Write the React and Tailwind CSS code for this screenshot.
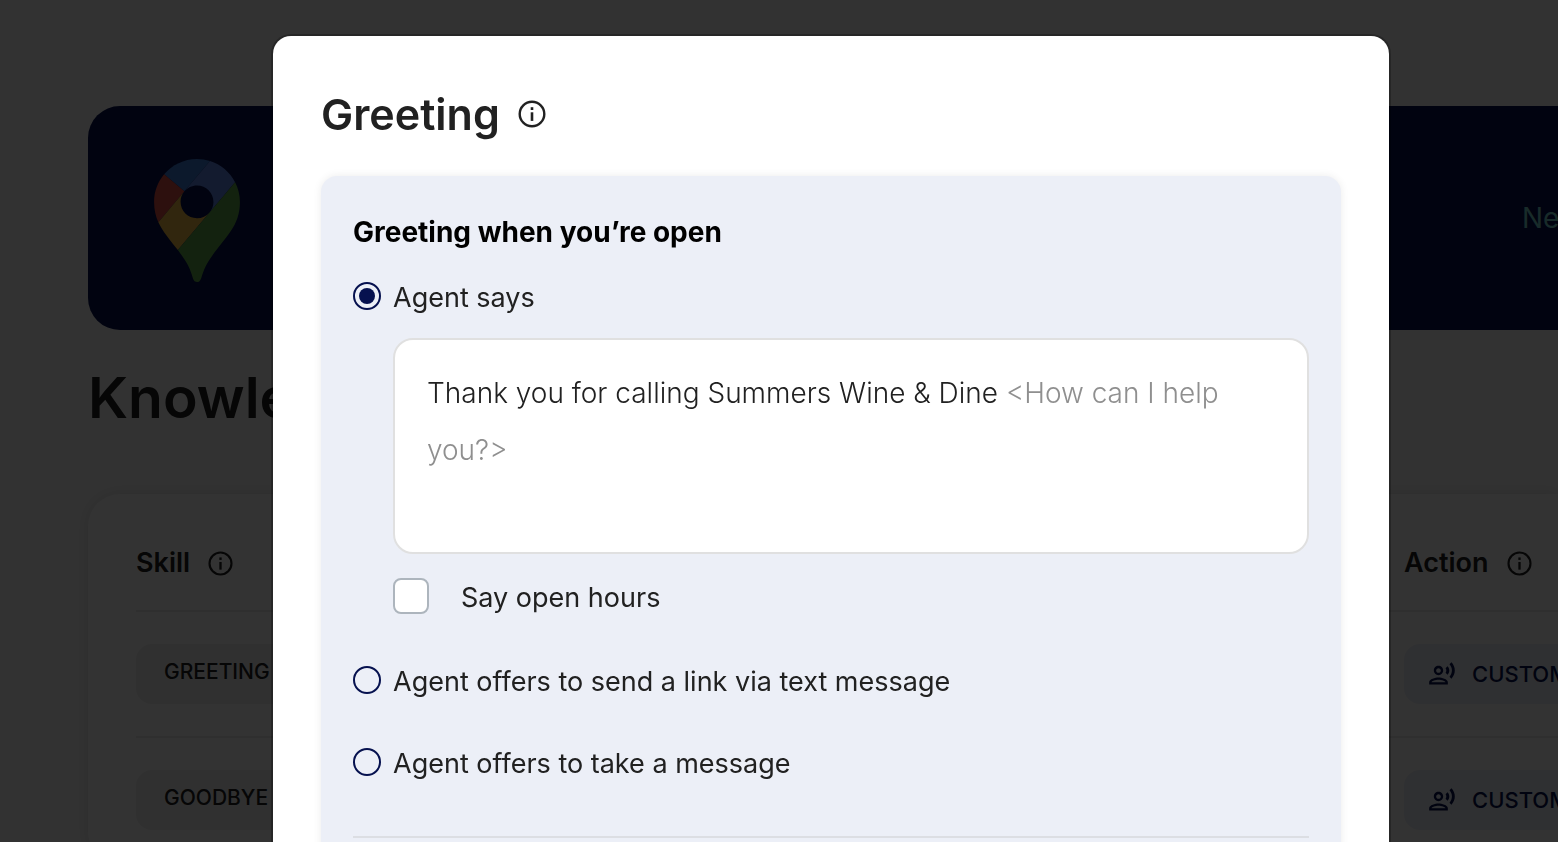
import { useState } from "react";
import { MdOutlineRecordVoiceOver } from "react-icons/md";

function InfoIcon({ className }) {
  return (
    <svg viewBox="0 0 28 28" fill="none" className={className} aria-hidden="true">
      <circle cx="14" cy="14" r="12.3" stroke="currentColor" strokeWidth="2.4" />
      <rect x="12.7" y="7.2" width="2.6" height="2.8" fill="currentColor" />
      <rect x="12.7" y="12.3" width="2.6" height="8.6" fill="currentColor" />
    </svg>
  );
}

function MapPin() {
  return (
    <svg viewBox="0 0 92.4 132.4" className="mt-1 h-[123px] w-[86px]" role="img" aria-label="Location">
      <path fill="#3c7edb" d="M60.2 2.2C55.8.8 51 0 46.1 0 32 0 19.3 6.4 10.8 16.5l21.8 18.3L60.2 2.2z" />
      <path fill="#e04f46" d="M10.8 16.5C4.1 24.5 0 34.9 0 46.1c0 8.7 1.7 15.7 4.6 22l28-33.3-21.8-18.3z" />
      <path fill="#5f87e8" d="M46.2 28.5c9.8 0 17.7 7.9 17.7 17.7 0 4.3-1.6 8.3-4.2 11.4 0 0 13.9-16.6 27.5-32.7-5.6-10.8-15.3-19-27-22.7L32.6 34.8c3.3-3.8 8.1-6.3 13.6-6.3" />
      <path fill="#f2bc48" d="M46.2 63.8c-9.8 0-17.7-7.9-17.7-17.7 0-4.3 1.5-8.3 4.1-11.3l-28 33.3c4.8 10.6 12.8 19.2 21 29.9l34.1-40.5c-3.3 3.9-8.1 6.3-13.5 6.3" />
      <path fill="#62aa4d" d="M59.1 109.2c15.4-24.1 33.3-35 33.3-63 0-7.7-1.9-14.9-5.2-21.3L25.6 98c2.6 3.4 5.3 7.3 7.9 11.3 9.4 14.5 6.8 23.1 12.8 23.1s3.4-8.7 12.8-23.2" />
    </svg>
  );
}

const skills = ["GREETING", "GOODBYE"];

function SkillsPage() {
  return (
    <main className="flex h-screen flex-col overflow-hidden bg-[#fafafa] pl-[88px] pt-[106px]">
      <header className="flex h-56 shrink-0 items-center justify-between rounded-l-[32px] bg-[#06114f] pl-[66px]">
        <MapPin />
        <span className="w-9 overflow-hidden whitespace-nowrap text-[28px] text-[#7bd5cf]">Ne</span>
      </header>
      <h1 className="mt-8 text-[57px] font-semibold leading-[72px]">Knowledge</h1>
      <section className="mt-[60px] grow rounded-l-[32px] bg-white pl-12 pt-[22px] shadow-[0_0_16px_rgba(0,0,0,0.12)]">
        <table className="w-full table-fixed text-left">
          <thead>
            <tr className="h-[95px] border-b-2 border-[#e8e8e8]">
              <th className="font-semibold">
                <span className="flex items-center gap-[18px] text-[27px]">
                  Skill
                  <InfoIcon className="size-[25px]" />
                </span>
              </th>
              <th className="w-[154px] font-semibold">
                <span className="flex items-center gap-[18px] text-[27px]">
                  Action
                  <InfoIcon className="size-[25px]" />
                </span>
              </th>
            </tr>
          </thead>
          <tbody>
            {skills.map((skill) => (
              <tr key={skill} className="h-[126px] border-b-2 border-[#e8e8e8]">
                <td>
                  <span className="flex h-[60px] w-60 items-center rounded-2xl bg-[#f0f0f0] px-7 pb-1 text-[21px] font-medium">
                    {skill}
                  </span>
                </td>
                <td className="overflow-hidden">
                  <span className="flex h-[60px] items-center gap-4 whitespace-nowrap rounded-l-2xl bg-[#eceff7] pl-6 text-[22px] font-medium text-[#06114f]">
                    <MdOutlineRecordVoiceOver className="size-7 shrink-0" />
                    CUSTOM
                  </span>
                </td>
              </tr>
            ))}
          </tbody>
        </table>
      </section>
    </main>
  );
}

function RadioOption({ value, selected, onSelect, children }) {
  return (
    <label className="flex h-10 items-center gap-3 text-[27px]">
      <input
        type="radio"
        name="greeting"
        checked={selected === value}
        onChange={() => onSelect(value)}
        className="size-7 shrink-0 appearance-none rounded-full border-2 border-[#06114f] bg-clip-content p-1 checked:bg-[#06114f]"
      />
      <span className="pt-1">{children}</span>
    </label>
  );
}

function GreetingDialog() {
  const [mode, setMode] = useState("says");
  const [text, setText] = useState("Thank you for calling Summers Wine & Dine ");

  return (
    <div
      role="dialog"
      aria-modal="true"
      aria-labelledby="dialog-title"
      className="grow self-start rounded-[18px] bg-white px-12 pb-12 pt-12 ring-2 ring-black/25"
    >
      <div className="mb-8 flex h-[60px] items-center gap-[18px]">
        <h2 id="dialog-title" className="text-[43px] font-semibold">Greeting</h2>
        <button type="button" aria-label="About greetings">
          <InfoIcon className="size-7" />
        </button>
      </div>
      <div className="rounded-2xl bg-[#eceff7] p-8 shadow-[0_0_8px_rgba(0,0,0,0.08)]">
        <h3 className="mb-5 text-[28px] font-bold leading-[48px] text-black">Greeting when you’re open</h3>
        <RadioOption value="says" selected={mode} onSelect={setMode}>Agent says</RadioOption>
        <div className="ml-10 mt-[22px]">
          <div className="grid h-[216px] rounded-[20px] border-2 border-[#e0e0e0] bg-white text-[28px] font-light leading-[57px]">
            <div aria-hidden="true" className="col-start-1 row-start-1 whitespace-pre-wrap px-8 py-[25px] text-[#8f8f8f]">
              <span className="invisible">{text}</span>
              {"<How can I help you?>"}
            </div>
            <textarea
              aria-label="Agent says"
              value={text}
              onChange={(event) => setText(event.target.value)}
              className="col-start-1 row-start-1 resize-none overflow-hidden bg-transparent px-8 py-[25px] outline-none"
            />
          </div>
          <label className="mt-6 flex h-9 items-center gap-8 text-[27px]">
            <input type="checkbox" className="size-9 shrink-0 appearance-none rounded-lg border-2 border-[#adb5bd] bg-white checked:bg-[#06114f]" />
            <span className="pt-1">Say open hours</span>
          </label>
        </div>
        <div className="mt-[46px] flex flex-col gap-[42px]">
          <RadioOption value="link" selected={mode} onSelect={setMode}>
            Agent offers to send a link via text message
          </RadioOption>
          <RadioOption value="message" selected={mode} onSelect={setMode}>
            Agent offers to take a message
          </RadioOption>
        </div>
        <hr className="mt-[54px] border-t-2 border-[#dcdee3]" />
      </div>
    </div>
  );
}

export default function App() {
  return (
    <div className="font-['Inter',sans-serif] text-[#212121]">
      <SkillsPage />
      <div className="fixed inset-0 flex overflow-hidden bg-black/80 pl-[273px] pr-[169px] pt-9">
        <GreetingDialog />
      </div>
    </div>
  );
}
